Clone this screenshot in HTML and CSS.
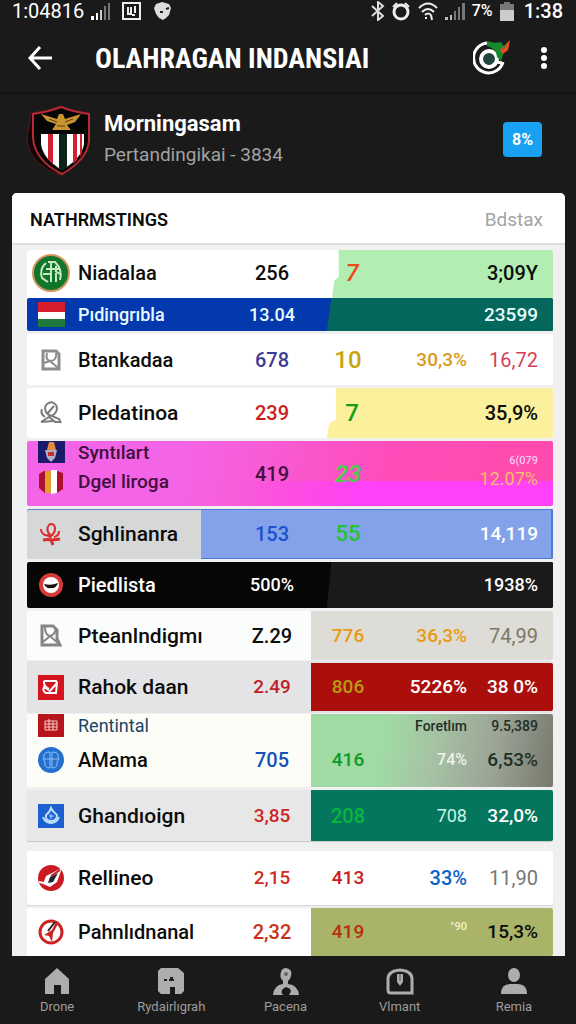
FILE: index.html
```html
<!DOCTYPE html>
<html lang="id">
<head>
<meta charset="utf-8">
<meta name="viewport" content="width=device-width, initial-scale=1">
<title>OLAHRAGAN INDANSIAI</title>
<link rel="stylesheet" href="styles.css">
</head>
<body>
<div class="status">
  <span class="clock">1:04816</span>
  <svg class="bars" width="20" height="18" viewBox="0 0 20 18"><path fill="#fff" d="M0 14h3v4H0zM5 11h2v7H5z"/><path fill="#ccc" d="M9 8h2v10H9z"/><path fill="#777" d="M13 4h2v14h-2zM17 1h2v17h-2z"/></svg>
  <svg class="boxed" width="19" height="18" viewBox="0 0 19 18" fill="none" stroke="#eee" stroke-width="2"><path d="M1 1h17v16H1zM6 5v7h3V5M13 4v7M10 13h3"/></svg>
  <svg class="mask" width="17" height="18" viewBox="0 0 17 18"><path fill="#ddd" d="M0 6 2 2l6-2 7 2 2 4-2 7-3 3-3 2-4-2-3-4z"/><path d="M6 10h3M12 7l3-1" stroke="#222" stroke-width="2"/></svg>
  <span class="spacer"></span>
  <svg width="14" height="20" viewBox="0 0 14 20" fill="none" stroke="#ddd" stroke-width="2"><path d="m1 5 11 10-5 4V1l5 4L1 15"/></svg>
  <svg width="19" height="19" viewBox="0 0 19 19" fill="none" stroke="#eee" stroke-width="3"><circle cx="9" cy="10" r="7"/><path stroke-width="2" d="m1 5 4-4M17 5l-4-4"/></svg>
  <svg width="20" height="19" viewBox="0 0 20 19" fill="none" stroke="#eee" stroke-width="2"><path d="M1 6q9-9 18 0M4 10q6-6 12 0M7 13q3-3 6 0"/><path d="M8 17v-2M13 13l1 5"/></svg>
  <svg width="20" height="18" viewBox="0 0 20 18"><path fill="#bbb" d="M0 15h3v3H0zM5 13h2v5H5z"/><path fill="#777" d="M9 9h2v9H9zM13 5h2v13h-2zM17 1h3v17h-3z"/></svg>
  <span class="charge">7%</span>
  <svg width="14" height="19" viewBox="0 0 14 19"><path fill="#777" d="M4 0h6v2h4v7H0V2h4z"/><path fill="#ccc" d="M0 8h14v11H0z"/></svg>
  <span class="time">1:38</span>
</div>

<header class="appbar">
  <button class="icon-btn" aria-label="Kembali"><svg width="24" height="26" viewBox="0 0 24 26" fill="none" stroke="#fff" stroke-width="3"><path d="M12 2 2 13l10 11M2 13h22"/></svg></button>
  <h1>OLAHRAGAN INDANSIAI</h1>
  <button class="icon-btn" aria-label="Profil"><svg width="38" height="36" viewBox="0 0 38 36"><g fill="none" stroke="#fff"><path stroke-width="3" d="M14 3A15 15 0 1 0 30 22"/><circle cx="16" cy="19" r="8" stroke-width="4" fill="#25443d"/><path stroke-width="3" d="m20 25 4-3 5 1"/></g><path fill="#148a2a" d="M14 1q8 3 14 1l4 6-4 13-4-4q0-8-10-11z"/><path fill="#f04a24" d="m37 0-2 10-5 4-3-4z"/><path stroke="#148a2a" d="m30 10 4-7"/></svg></button>
  <button class="icon-btn more" aria-label="Menu"><svg width="6" height="22" viewBox="0 0 6 22" fill="#fff"><circle cx="3" cy="3" r="3"/><circle cx="3" cy="11" r="3"/><circle cx="3" cy="19" r="3"/></svg></button>
</header>

<section class="profile">
  <svg class="crest" width="66" height="72" viewBox="0 0 66 72">
    <path fill="#120606" stroke="#5d141a" stroke-width="1" d="M5 8 Q20 7 34 1 Q48 7 63 8 V36 Q61 55 35 70 Q3 60 1 33z"/>
    <path fill="#060505" stroke="#b52b31" stroke-width="2" d="M7 9 Q22 7 35 2 Q48 7 63 9 V36 Q61 55 36 69 Q9 56 7 33z"/>
    <path fill="#fff" d="M15 29h43v10q-2 14-22 26Q17 54 15 39z"/>
    <path fill="#d4202f" d="M22 29h5v30l-5-5zM47 29h4v26l-4 4zM54 29h2v19l-2 4z"/>
    <path fill="#0b2417" d="M33 29h8v33l-5 4-3-3z"/>
    <path fill="#c99532" d="m15 9 16 5 2-5h4l2 5 16-5-6 8-8 3 4 5H26l4-6-9-3z"/><path stroke="#5b3b10" d="m23 14 8 3m16-3-8 3m-8 4h8" fill="none"/>
  </svg>
  <div class="who">
    <h2>Morningasam</h2>
    <p>Pertandingikai - 3834</p>
  </div>
  <button class="badge">8%</button>
</section>

<main class="card">
  <div class="card-head"><h3>NATHRMSTINGS</h3><a href="#">Bdstax</a></div>
  <table class="standings">
    <tbody>
      <tr class="r1 split flush"><td class="ico"><svg width="38" height="38" viewBox="0 0 38 38"><circle cx="19" cy="19" r="18" fill="#12752c" stroke="#cf9660" stroke-width="2"/><g fill="none" stroke="#c4ecc0" stroke-width="2"><path d="M14 9q-7 6-4 15l6 4M16 8h7q8 8 5 18M14 15h14M19 9v19M24 12v16M11 20h9M28 20l-5-3"/></g></svg></td><th scope="row">Niadalaa</th><td class="a">256</td><td class="b"><em>7</em></td><td class="c"></td><td class="d">3;09Y</td></tr>
      <tr class="r2 split"><td class="ico"><svg width="27" height="25" viewBox="0 0 27 25"><path fill="#d81e2c" d="M0 0h27v11H0z"/><path fill="#fff" d="M0 10h27v7H0z"/><path fill="#1c7a3c" d="M0 17h27v8H0z"/></svg></td><th scope="row">Pıdingrıbla</th><td class="a">13.04</td><td class="b"></td><td class="c"></td><td class="d">23599</td></tr>
      <tr class="r3"><td class="ico"><svg width="20" height="22" viewBox="0 0 20 22" fill="none" stroke="#8c8c8c"><path stroke-width="3" d="M2 2h13l3 3v15H2z"/><path stroke-width="2" d="M6 4q-2 8 4 8 6-1 5-8M3 14l6-2 8 7"/></svg></td><th scope="row">Btankadaa</th><td class="a">678</td><td class="b">10</td><td class="c">30,3%</td><td class="d thin">16,72</td></tr>
      <tr class="r4 split"><td class="ico"><svg width="24" height="24" viewBox="0 0 24 24" fill="none" stroke="#7c7c7c" stroke-width="2"><path d="M8 13Q4 6 8 3q5-4 9 1 3 6-4 11l-5-2M8 13l7-8M3 8q-2 5 3 8M13 15l7 3 2 4M2 21l8-5 5 4-13 1M15 21h7"/></svg></td><th scope="row">Pledatinoa</th><td class="a">239</td><td class="b">7</td><td class="c"></td><td class="d">35,9%</td></tr>
      <tr class="r5"><td class="ico stack"><span><svg width="27" height="22" viewBox="0 0 27 22"><path fill="#1c1a6a" d="M0 0h27v22H0z"/><path fill="#e48a3c" d="M11 1h5l2 8h-9z"/><path fill="#b4b0c4" d="M7 9h12l-2 8-4 4-4-4z"/><path fill="#c3302f" d="M10 11h6v4h-6z"/></svg></span><span><svg width="26" height="24" viewBox="0 0 26 24"><path fill="#b01030" d="M6 1 1 4v14l6 5V1zM19 1l6 2v16l-6 4z"/><path fill="#e0a02a" d="M7 1h6v22H9l-2-1z"/><path fill="#fff" d="M13 0h6v23l-6 1z"/></svg></span></td><th scope="row" class="stack"><span>Syntılart</span><span>Dgel liroga</span></th><td class="a">419</td><td class="b"><em>23</em></td><td class="c"></td><td class="d"><small>6(079</small><span>12.07%</span></td></tr>
      <tr class="r6 split"><td class="ico"><svg width="22" height="24" viewBox="0 0 22 24" fill="none" stroke="#d92c2c" stroke-width="2"><path d="M11 14Q5 8 9 3q2-2 5 0 3 6-3 11zM1 7q0 4 4 6 4 0 6 3M19 9q0 5-5 6"/><path stroke-width="3" d="M3 18q5-1 9 0l8-1M11 18l2 5"/></svg></td><th scope="row">Sghlinanra</th><td class="a">153</td><td class="b">55</td><td class="c"></td><td class="d">14,119</td></tr>
      <tr class="r7 split"><td class="ico"><svg width="24" height="24" viewBox="0 0 24 24"><circle cx="12" cy="12" r="12" fill="#d83a3a"/><circle cx="12" cy="12" r="8" fill="#fff"/><path fill="#201010" d="M5 11q7 2 14-1-2 6-7 5-5 1-7-4z"/></svg></td><th scope="row">Piedlista</th><td class="a">500%</td><td class="b"></td><td class="c"></td><td class="d">1938%</td></tr>
      <tr class="r8 split"><td class="ico"><svg width="22" height="23" viewBox="0 0 22 23" fill="none" stroke="#868686"><path stroke-width="3" d="M2 2h11l4 4v9l3 6H2z"/><path stroke-width="2" d="M5 3q0 8 5 9 5-1 6-8M3 18l7-6 9 8"/></svg></td><th scope="row">Pteanlndigmı</th><td class="a">Z.29</td><td class="b">776</td><td class="c">36,3%</td><td class="d thin">74,99</td></tr>
      <tr class="r9 split"><td class="ico"><svg width="26" height="25" viewBox="0 0 26 25"><path fill="#d51420" d="M0 0h26v25H0z"/><path fill="none" stroke="#fff" stroke-width="2" d="M6 6h12l1 2-1 10H8q-4-2-2-6l6 4 7-8M6 6q-1 5 5 8"/></svg></td><th scope="row">Rahok daan</th><td class="a">2.49</td><td class="b">806</td><td class="c">5226%</td><td class="d">38 0%</td></tr>
      <tr class="r10 split"><td class="ico stack"><span><svg width="26" height="23" viewBox="0 0 26 23"><path fill="#b8141c" d="M0 0h26v23H0z"/><path fill="none" stroke="#f4cfc9" stroke-width="1" d="M7 7h12v9H7zM7 10h12M7 13h12M11 5v11M15 7v9"/></svg></span><span><svg width="26" height="26" viewBox="0 0 26 26"><circle cx="13" cy="13" r="13" fill="#2470cf"/><path fill="none" stroke="#8cc0f6" stroke-width="1" d="M12 5Q5 5 6 10q-2 2 1 5-1 6 5 6zM14 5q7 0 6 5 2 2-1 5 1 6-5 6zM6 12h14"/></svg></span></td><th scope="row" class="stack"><span>Rentintal</span><span>AMama</span></th><td class="a stack"><span></span><span>705</span></td><td class="b stack"><span></span><span>416</span></td><td class="c stack"><span>Foretlım</span><span>74%</span></td><td class="d stack"><span>9.5,389</span><span>6,53%</span></td></tr>
      <tr class="r11 split"><td class="ico"><svg width="26" height="24" viewBox="0 0 26 24"><path fill="#1b5fd0" d="M0 0h26v24H0z"/><path fill="none" stroke="#b9dcfa" stroke-width="2" d="M13 4q-1 4-5 7-1 6 5 6t6-6q-4-3-6-7zM5 13q2 6 8 6 6 0 8-6"/><path stroke="#b9dcfa" d="M11 12h5M13 10v5"/></svg></td><th scope="row">Ghandıoign</th><td class="a">3,85</td><td class="b">208</td><td class="c thin">708</td><td class="d">32,0%</td></tr>
      <tr class="r12"><td class="ico"><svg width="26" height="26" viewBox="0 0 26 26"><circle cx="13" cy="13" r="13" fill="#c81c22"/><path fill="#fff" d="M24 3 19 17l-7 5-7-3 3-8z"/><path fill="#20242c" d="M20 8 15 17l-5 1 2-6z"/><path fill="none" stroke="#c81c22" stroke-width="2" d="m22 5-9 6"/><path d="m1 17 5 1" stroke="#fff" stroke-width="2"/></svg></td><th scope="row">Rellineo</th><td class="a">2,15</td><td class="b">413</td><td class="c">33%</td><td class="d thin">11,90</td></tr>
      <tr class="r13 split"><td class="ico"><svg width="26" height="26" viewBox="0 0 26 26"><circle cx="13" cy="13" r="11" fill="#fff" stroke="#cc2420" stroke-width="3"/><path fill="#cc2420" d="m18 3-4 8-8 5 5 1 3 6 1-9 5-9z"/><path stroke="#222" stroke-width="2" d="m17 3-7 9"/></svg></td><th scope="row">Pahnlıdnanal</th><td class="a">2,32</td><td class="b">419</td><td class="c"><small>°90</small></td><td class="d">15,3%</td></tr>
    </tbody>
  </table>
</main>

<nav class="tabs">
  <a href="#"><svg width="26" height="26" viewBox="0 0 26 26"><path fill="#adadad" d="M13 0 25 11v15h-8v-9H10v9H1V11z"/></svg>Drone</a>
  <a href="#"><svg width="26" height="26" viewBox="0 0 26 26"><path fill="#adadad" d="M3 0h17l6 5v18l-3 3h-6v-7h-5v7H3l-3-3V3z"/><path stroke="#222" stroke-width="2" d="M6 12h3M11 12h5M12 10h3"/></svg>Rydairlıgrah</a>
  <a href="#"><svg width="28" height="28" viewBox="0 0 28 28"><path fill="#adadad" d="M14 0q7 1 5 8-1 4-3 5v3q10 1 11 11H17q5-6-3-8-7 3-3 8H1q1-10 10-11v-3Q7 9 9 4q1-4 5-4z"/><circle cx="14" cy="6" r="2" fill="#666"/></svg>Pacena</a>
  <a href="#"><svg width="28" height="28" viewBox="0 0 28 28"><path fill="none" stroke="#adadad" stroke-width="3" d="M5 25q-3 0-3-3V11q0-8 12-9 12 1 12 9v14z"/><path fill="#adadad" d="M11 6h6v8l-3 4-3-4z"/><path stroke="#555" d="M14 6v7"/></svg>Vlmant</a>
  <a href="#"><svg width="26" height="26" viewBox="0 0 26 26" fill="#adadad"><ellipse cx="13" cy="7" rx="6" ry="7"/><path d="M0 26q0-10 9-10h8q9 0 9 10z"/></svg>Remia</a>
</nav>
</body>
</html>
```

FILE: styles.css
```css
* { box-sizing: border-box; }

body {
  margin: 0;
  min-height: 100vh;
  display: flex;
  flex-direction: column;
  background: #1b1a1a;
  color: #fff;
  font-family: Roboto, "Liberation Sans", sans-serif;
  font-size: 20px;
  line-height: 24px;
}

h1, h2, h3, p { margin: 0; }
a { color: inherit; text-decoration: none; }
button { border: 0; padding: 0; background: none; color: inherit; font: inherit; cursor: pointer; }
svg { display: block; flex: none; }

.status {
  display: flex;
  align-items: center;
  gap: 7px;
  height: 22px;
  padding: 0 13px 0 12px;
}
.status .spacer { flex: 1; }
.boxed { margin-left: 4px; }
.mask { margin-left: 6px; }
.charge { font-size: 16px; font-weight: 500; }
.time { font-weight: 500; margin-left: 3px; }

.appbar {
  display: flex;
  align-items: center;
  height: 72px;
  padding: 2px 24px 0 28px;
  border-bottom: 2px solid #131212;
}
.appbar h1 {
  flex: 1;
  padding: 2px 0 0 43px;
  font-family: "Roboto Condensed", "Liberation Sans Narrow", Roboto, sans-serif;
  font-size: 28px;
  line-height: 32px;
  font-weight: 700;
  white-space: nowrap;
}
.more { padding: 0 5px; margin-left: 25px; }

.profile {
  display: flex;
  align-items: center;
  height: 99px;
  padding: 0 34px 8px 26px;
}
.crest { margin-top: 2px; }
.who { flex: 1; padding: 0 0 2px 12px; }
.who h2 { font-size: 22px; line-height: 32px; font-weight: 700; }
.who p { font-size: 19px; line-height: 30px; color: #a2a2a2; }
.badge {
  width: 39px;
  height: 35px;
  border-radius: 4px;
  background: #18a0f2;
  font-size: 16px;
  font-weight: 700;
}

.card {
  flex: 1;
  margin: 0 11px 0 12px;
  border-radius: 5px 5px 0 0;
  background: #f0f0f1;
  color: #0c0c0c;
  overflow: hidden;
}
.card-head {
  display: flex;
  align-items: center;
  justify-content: space-between;
  height: 52px;
  padding: 3px 22px 0 18px;
  background: #fff;
  border-bottom: 2px solid #dedede;
}
.card-head h3 { font-size: 18px; font-weight: 600; }
.card-head a { font-size: 19px; color: #a3a3a3; }

.standings { display: block; padding: 5px 12px 0 15px; }
.standings tbody { display: block; }
.standings tr {
  position: relative;
  isolation: isolate;
  display: grid;
  grid-template-columns: 51px 1fr 90px 62px 88px 71px;
  align-items: center;
  min-height: 50px;
  margin-bottom: 3px;
  padding-right: 15px;
  border-radius: 2px;
  background: #fff;
}
.standings th, .standings td { padding: 0; white-space: nowrap; font-weight: 500; }
.standings th { text-align: left; }
.standings .ico { display: flex; justify-content: center; padding-right: 3px; }
.standings .a, .standings .b { text-align: center; }
.standings .c, .standings .d { text-align: right; }
.standings .thin { font-weight: 400; }

/* coloured right-hand part of a row */
.split::before {
  content: "";
  position: absolute;
  z-index: -1;
  inset: 0 0 0 var(--at, 54%);
  border-radius: 0 2px 2px 0;
  background: var(--fill);
  clip-path: var(--cut, none);
}

.standings .stack { display: flex; flex-direction: column; align-self: start; justify-content: flex-start; }
.standings .stack span { display: flex; align-items: center; height: 44px; }
.standings .stack span:first-child { height: 24px; }
.standings .ico.stack { align-items: center; }
.standings .ico.stack span:first-child { align-items: flex-start; }
.a.stack, .b.stack { align-items: center; }
.c.stack, .d.stack { align-items: flex-end; }

.standings .flush { margin-bottom: 0; }
.standings .r1 { min-height: 48px; --at: 58%; --fill: #b2eeb2; --cut: polygon(3% 0, 100% 0, 100% 100%, 0 100%, 1% 64%, 3% 55%); padding-bottom: 3px; }
.r1 .b { color: #ee4b1c; font-size: 24px; padding-left: 8px; }
.standings .r2 { min-height: 33px; font-size: 18px; background: #0439ae; color: #e8fbff; --at: 57%; --fill: #03675b; --cut: polygon(2% 0, 100% 0, 100% 100%, 0 100%); }
.r2 .d { font-size: 19px; }
.standings .r3 { min-height: 51px; }
.r3 .a { color: #3b3d96; }
.r3 .b { color: #c8a40c; font-size: 24px; }
.r3 .c { color: #d99a1c; font-size: 19px; }
.r3 .d { color: #d43f56; }
.standings .r4 { --at: 57%; --fill: #fbf09c; --cut: polygon(4% 0, 100% 0, 100% 100%, 0 100%, 1% 72%, 4% 62%); }
.r4 th { font-size: 21px; }
.r4 .a { color: #cc1d1d; }
.r4 .b { color: #12a012; font-size: 24px; padding-left: 8px; }
.standings .r5 {
  min-height: 65px;
  color: #40103c;
  background:
    linear-gradient(90deg, transparent 40%, #ff41fa 64%) bottom / 100% 38% no-repeat,
    linear-gradient(100deg, #f464e6 30%, #ff4cb8 70%, #ff4bac);
}
.r5 th { font-size: 19px; }
.r5 .stack span:last-child { height: 34px; }
.r5 .b { color: #45cf4a; font-size: 24px; }
.r5 .d { color: #f8bc70; font-size: 18px; font-weight: 400; padding-bottom: 4px; }
.r5 small { display: block; font-size: 11px; line-height: 14px; font-weight: 500; color: #f4c9ee; }
.r5 .d span { display: block; line-height: 22px; }
.standings .r6 { background: #d6d7d7; --at: 33%; --fill: #84a2e9; box-shadow: inset -2px 0 #3160c8, inset 0 1px #6678d0; }
.r6.split::before { border: 1px solid #4f78d4; border-right-width: 2px; border-left: 0; }
.r6 th { font-size: 21px; }
.r6 .a { color: #1a52d0; }
.r6 .b { color: #22c52e; font-size: 22px; }
.r6 .d { color: #fff; font-size: 19px; }
.standings .r7 { min-height: 46px; background: #060606; color: #fff; --at: 57%; --fill: #1b1a1a; --cut: polygon(2% 0, 100% 0, 100% 100%, 0 100%); }
.r7 .a, .r7 .d { font-size: 18px; }
.standings .r8 { min-height: 49px; background: #fbfdfd; --fill: #dddcd6; }
.r8 th { font-size: 21px; }
.r8 .b, .r8 .c { color: #e99a10; }
.r8 .b, .r8 .c { font-size: 19px; }
.r8 .d { color: #7a7964; }
.standings .r9 { min-height: 48px; background: #e4e4e6; box-shadow: 0 -2px #e4e4e6, 0 2px #e4e4e6; --fill: #ab0f0c; }
.r9 th { font-size: 21px; }
.r9 .a { color: #c01f28; font-size: 19px; }
.r9 .b { color: #b79d0e; font-size: 19px; }
.r9 .c, .r9 .d { color: #fff; font-size: 19px; }
.standings .r10 {
  min-height: 73px;
  background: #fdfdf7;
  --fill: linear-gradient(100deg, #a0dba4 30%, #a6c3a4 50%, #9ba496 75%, #77796d);
}
.r10 th span:first-child { color: #174468; font-size: 18px; font-weight: 400; }
.r10 .a { color: #1450ba; }
.r10 .b { color: #0d9a28; font-size: 19px; }
.r10 .c, .r10 .d { color: #1f2f26; }
.r10 .c span:first-child { font-size: 14px; }
.r10 .d span:first-child { font-size: 14px; }
.r10 .d span:last-child { font-size: 19px; }
.r10 .c span:last-child { color: #eef3ec; font-size: 16px; }
.standings .r11 { min-height: 51px; background: #e7e7e8; margin-bottom: 10px; box-shadow: 0 1px 1px #c6c6c6; --fill: #04765e; }
.r11 th { font-size: 21px; }
.r11 .a { color: #cf2424; font-size: 19px; }
.r11 .b { color: #07b83c; }
.r11 .c { color: #c9f3e4; font-size: 18px; }
.r11 .d { color: #fff; font-size: 19px; }
.standings .r12 { min-height: 54px; box-shadow: 0 1px 1px #d4d4d4; }
.r12 th { font-size: 21px; }
.r12 .a { color: #cd2f25; font-size: 19px; }
.r12 .b { color: #c8201a; font-size: 19px; }
.r12 .c { color: #0f62c8; }
.r12 .d { color: #777; }
.standings .r13 { min-height: 48px; margin-bottom: 0; --fill: #a9b468; }
.r13 .a { color: #c6341a; }
.r13 .b { color: #b9300c; font-size: 19px; }
.r13 .d { font-size: 19px; }
.r13 small { display: block; font-size: 11px; line-height: 12px; color: #eef3cf; padding-bottom: 10px; }

.tabs {
  position: sticky;
  bottom: 0;
  z-index: 1;
  display: flex;
  height: 68px;
  padding-right: 5px;
  background: #1b1a1a;
  color: #9c9c9c;
  font-size: 13px;
  line-height: 16px;
}
.tabs a {
  flex: 1;
  display: flex;
  flex-direction: column;
  align-items: center;
  justify-content: space-between;
  padding: 12px 0 9px;
}
```
